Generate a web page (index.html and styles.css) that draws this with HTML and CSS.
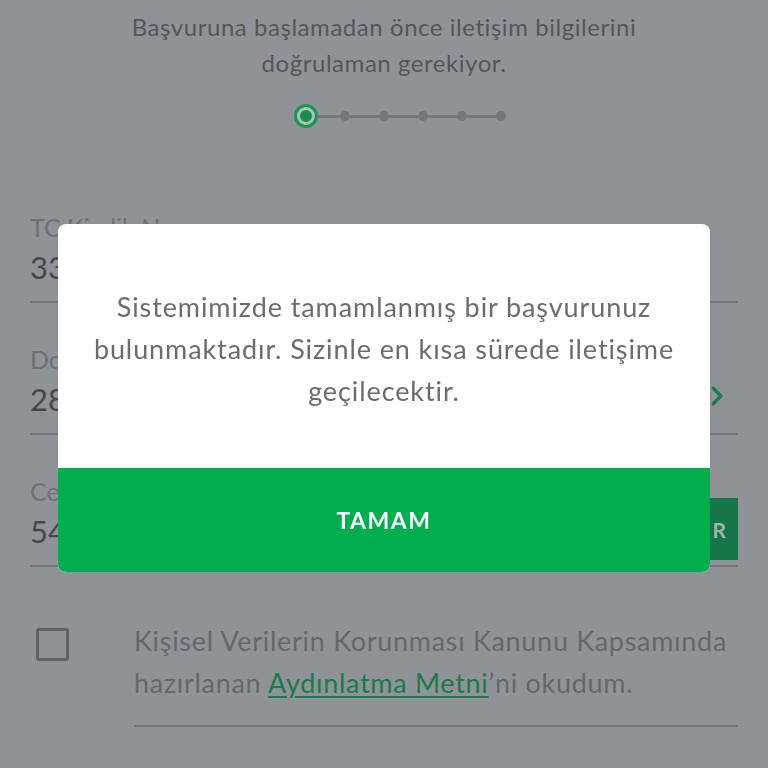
FILE: index.html
```html
<!DOCTYPE html>
<html lang="tr">
<head>
<meta charset="utf-8">
<title>Başvuru</title>
<link rel="stylesheet" href="styles.css">
</head>
<body>
<main class="page">
  <p class="intro">Başvuruna başlamadan önce iletişim bilgilerini<br>doğrulaman gerekiyor.</p>
  <div class="stepper">
    <span class="step active"></span><span class="bar first"></span>
    <span class="step"></span><span class="bar"></span>
    <span class="step"></span><span class="bar"></span>
    <span class="step"></span><span class="bar"></span>
    <span class="step"></span><span class="bar"></span>
    <span class="step"></span>
  </div>
  <div class="field">
    <div class="label">TC Kimlik Numarası</div>
    <div class="value">33</div>
  </div>
  <div class="field">
    <div class="label">Doğum Tarihi</div>
    <div class="value-row">
      <div class="value">28</div>
      <svg class="chev" width="14" height="22" viewBox="0 0 14 22"><path d="M3 3 L11 11 L3 19" fill="none" stroke="#1a7d4b" stroke-width="3.2" stroke-linecap="round" stroke-linejoin="round"/></svg>
    </div>
  </div>
  <div class="field phone">
    <div class="phone-text">
      <div class="label">Cep Telefonu</div>
      <div class="value">54</div>
    </div>
    <button class="send">KOD GÖNDER</button>
  </div>
  <div class="consent">
    <span class="box"></span>
    <p class="consent-text">Kişisel Verilerin Korunması Kanunu Kapsamında hazırlanan <a class="link">Aydınlatma Metni</a>’ni okudum.</p>
  </div>
</main>
<div class="dialog">
  <p class="dialog-text">Sistemimizde tamamlanmış bir başvurunuz bulunmaktadır. Sizinle en kısa sürede iletişime geçilecektir.</p>
  <button class="ok">TAMAM</button>
</div>
</body>
</html>
```
FILE: styles.css
```css
html, body {
  margin: 0;
  padding: 0;
  background: #8f9397;
  font-family: Lato, "Noto Sans", sans-serif;
  height: 768px;
  overflow: hidden;
}
.page {
  padding: 9px 30px 0 30px;
}
.intro {
  margin: 0;
  text-align: center;
  font-size: 24px;
  letter-spacing: 0.55px;
  line-height: 36px;
  color: #54575a;
}
.stepper {
  display: flex;
  align-items: center;
  margin-top: 23px;
  height: 24px;
  padding-left: 267px;
}
.step {
  width: 10px;
  height: 10px;
  border-radius: 50%;
  background: #74787b;
  flex: none;
}
.step.active {
  width: 12px;
  height: 12px;
  background: #1c8b4e;
  border: 3px solid #a7c4b1;
  box-shadow: 0 0 0 3px #1a9654;
}
.bar {
  width: 29px;
  height: 3px;
  background: #74787b;
  flex: none;
}
.bar.first {
  width: 23px;
  margin-left: 2px;
}
.field {
  border-bottom: 2px solid #73777a;
  padding-bottom: 14px;
  margin-top: 84px;
}
.field + .field {
  margin-top: 41px;
}
.label {
  font-size: 25px;
  line-height: 30px;
  color: #6e7174;
}
.value {
  margin-top: 5px;
  font-size: 31px;
  line-height: 40px;
  color: #45484b;
}
.value-row {
  display: flex;
  align-items: center;
  justify-content: space-between;
}
.chev {
  margin-top: -2px;
  margin-right: 14px;
}
.phone {
  display: flex;
  align-items: flex-end;
  justify-content: space-between;
  padding-bottom: 5px;
}
.phone-text {
  padding-bottom: 9px;
}
.send {
  border: 0;
  background: #17754a;
  color: #a3b5aa;
  font-family: Lato, sans-serif;
  font-weight: 700;
  font-size: 21px;
  letter-spacing: 3px;
  height: 62px;
  padding: 0 9px 0 24px;
  margin: 0;
}
.consent {
  display: flex;
  align-items: flex-start;
  margin-top: 61px;
}
.box {
  flex: none;
  width: 27px;
  height: 27px;
  border: 3px solid #606366;
  border-radius: 3px;
  margin-left: 6px;
}
.consent-text {
  margin: -8px 0 0 65px;
  font-size: 27px;
  letter-spacing: 0.7px;
  line-height: 42px;
  color: #65686b;
  border-bottom: 2px solid #73777a;
  padding-bottom: 21px;
  flex: 1;
}
.link {
  color: #1a7a4b;
  text-decoration: underline;
  text-underline-offset: 3px;
}
.dialog {
  position: fixed;
  left: 58px;
  top: 224px;
  width: 652px;
  height: 348px;
  border-radius: 8px;
  overflow: hidden;
  background: #ffffff;
  display: flex;
  flex-direction: column;
}
.dialog-text {
  flex: 1;
  margin: 0;
  padding: 62px 28px 0 28px;
  text-align: center;
  font-size: 27px;
  letter-spacing: 0.9px;
  line-height: 42px;
  color: #6c6c6c;
}
.ok {
  flex: none;
  height: 104px;
  border: 0;
  margin: 0;
  background: #00ae4d;
  color: #ffffff;
  font-family: Lato, sans-serif;
  font-weight: 700;
  font-size: 23px;
  letter-spacing: 1.5px;
}
```
